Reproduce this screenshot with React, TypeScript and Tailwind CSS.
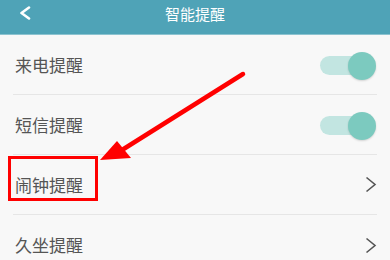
const rows = [
  { label: '来电提醒', kind: 'toggle' },
  { label: '短信提醒', kind: 'toggle' },
  { label: '闹钟提醒', kind: 'link' },
  { label: '久坐提醒', kind: 'link' },
]

function Toggle() {
  return (
    <div className="relative h-[28px] w-[56px]">
      <div className="absolute left-0 top-[5px] h-[19px] w-[46px] rounded-full bg-[#c2e5e1]" />
      <div className="absolute right-0 top-[1px] h-[28px] w-[28px] rounded-full bg-[#7ccabf] shadow-[0_1px_2px_rgba(0,0,0,0.15)]" />
    </div>
  )
}

function Chevron() {
  return (
    <svg width="12" height="17" viewBox="0 0 12 17" fill="none">
      <path d="M1.5 1.5 L10 8.5 L1.5 15.5" stroke="#555" strokeWidth="1.6" />
    </svg>
  )
}

export default function App() {
  return (
    <div
      className="relative h-[260px] w-[390px] overflow-hidden bg-[#f8f8f8]"
      style={{ fontFamily: '"Noto Sans CJK SC", "Noto Sans", sans-serif' }}
    >
      {/* header */}
      <div className="relative flex h-[35px] items-center justify-center border-b border-[#8cc3d0] bg-[#4fa3b7]">
        <svg className="absolute left-[18px] top-[6px]" width="14" height="14" viewBox="0 0 14 14" fill="none">
          <path d="M11 1.5 L3.5 7 L11 12.5" stroke="#fff" strokeWidth="2.6" strokeLinecap="round" strokeLinejoin="round" />
        </svg>
        <span className="mb-[6px] text-[15px] text-white">智能提醒</span>
      </div>

      <div className="flex flex-col">
        {rows.map((row, i) => (
          <div
            key={row.label}
            className={`mx-[13px] flex h-[60px] items-center justify-between ${i < rows.length - 1 ? 'border-b border-[#e6e6e6]' : ''}`}
          >
            <span className="pl-[2px] text-[17px] text-[#555]">{row.label}</span>
            {row.kind === 'toggle' ? (
              <div className="mr-[1px]">
                <Toggle />
              </div>
            ) : (
              <Chevron />
            )}
          </div>
        ))}
      </div>

      {/* annotation */}
      <div className="absolute left-[8px] top-[156px] h-[45px] w-[90px] border-[3.5px] border-[#ff0000]" />
      <svg className="absolute left-0 top-0" width="390" height="260" viewBox="0 0 390 260">
        <line x1="243" y1="74" x2="122" y2="150" stroke="#ff0000" strokeWidth="4.5" strokeLinecap="round" />
        <polygon points="100,160 117,141 131,158" fill="#ff0000" />
      </svg>
    </div>
  )
}
